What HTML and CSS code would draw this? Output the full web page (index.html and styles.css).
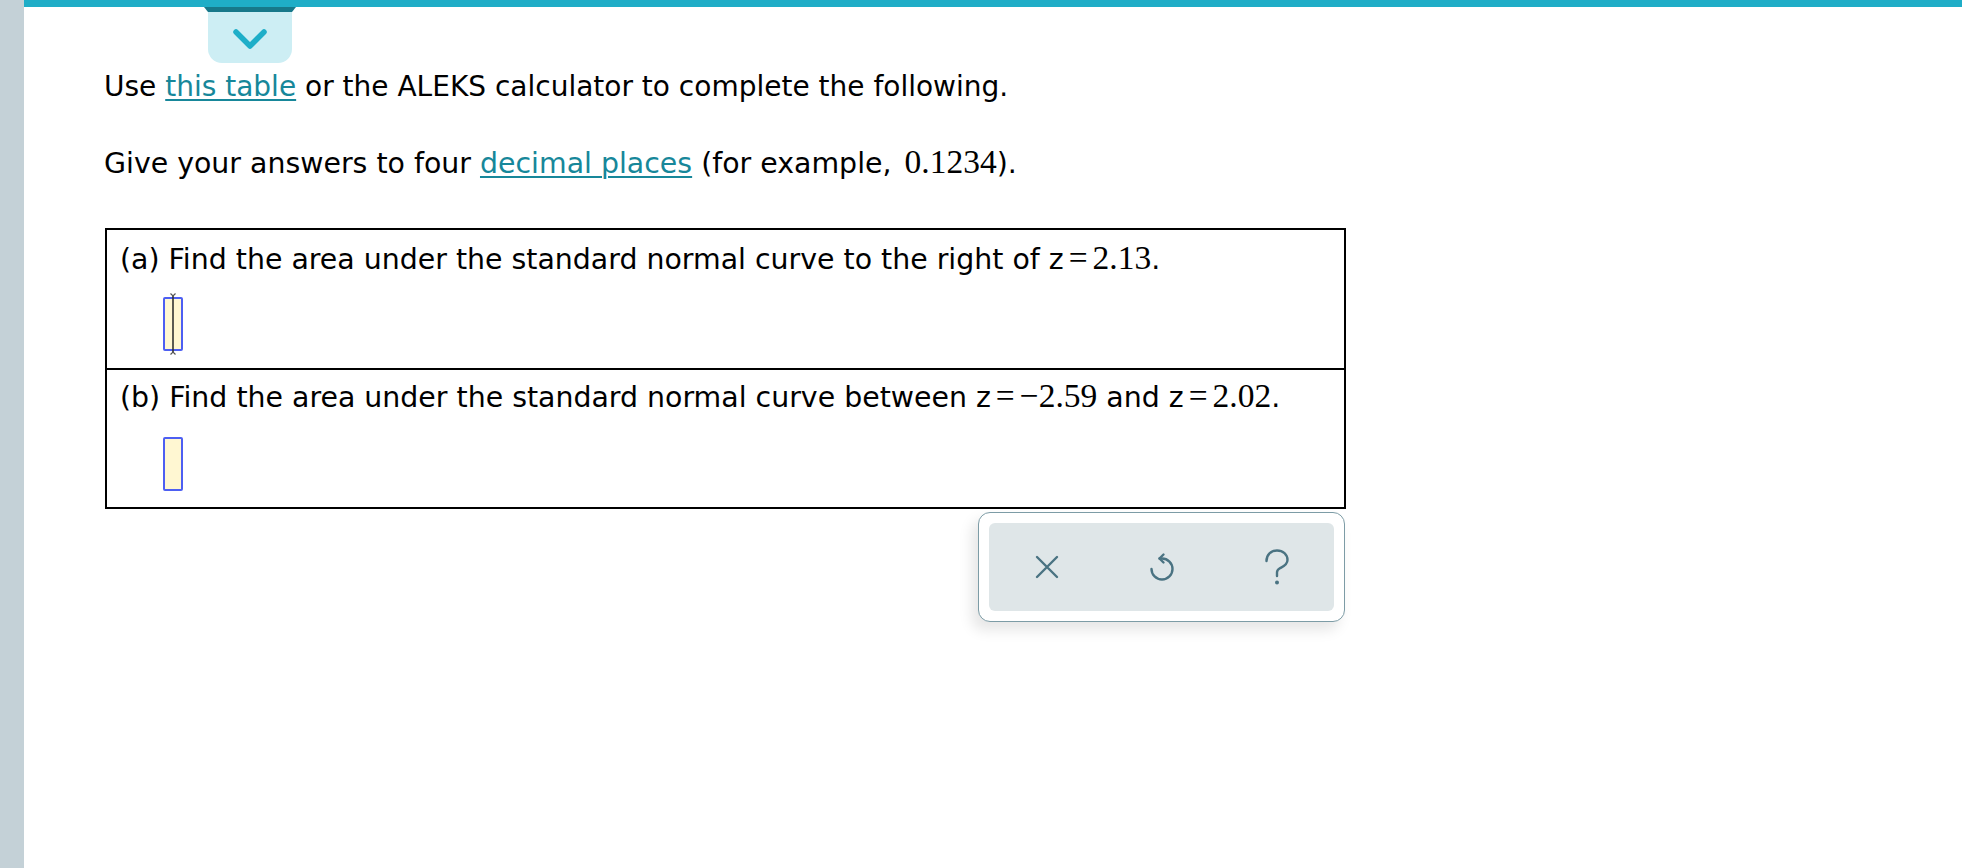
FILE: index.html
```html
<!DOCTYPE html>
<html lang="en">
<head>
<meta charset="utf-8">
<title>ALEKS</title>
<link rel="stylesheet" href="styles.css">
</head>
<body>
<div class="app">
  <div class="sidebar"></div>
  <div class="main">
    <div class="topbar"></div>
    <div class="tab">
      <svg class="chev" width="36" height="22" viewBox="0 0 36 22"><path d="M4 4 L18 18 L32 4" fill="none" stroke="#1eaec8" stroke-width="5.5" stroke-linecap="round" stroke-linejoin="round"/></svg>
    </div>
    <div class="content">
      <p class="line line1">Use <a class="link" href="#">this table</a> or the ALEKS calculator to complete the following.</p>
      <p class="line line2">Give your answers to four <a class="link" href="#">decimal places</a> (for example, <span class="math num">0.1234</span>).</p>
      <div class="qwrap">
        <div class="qbox">
          <div class="part">
            <div class="line">(a) Find the area under the standard normal curve to the right of z<span class="math eq">=</span><span class="math">2.13</span>.</div>
            <div class="answer">
              <span class="input">
                <svg class="caret" width="20" height="62" viewBox="0 0 20 62"><path d="M10 2 V60" stroke="#333" stroke-width="1.6" fill="none"/><path d="M7.5 0.5 L10 3 L12.5 0.5 M7.5 61.5 L10 59 L12.5 61.5" stroke="#555" stroke-width="1.2" fill="none"/></svg>
              </span>
            </div>
          </div>
          <div class="part part-b">
            <div class="line">(b) Find the area under the standard normal curve between z<span class="math eq">=</span><span class="math">&minus;2.59</span> and z<span class="math eq">=</span><span class="math">2.02</span>.</div>
            <div class="answer">
              <span class="input"></span>
            </div>
          </div>
        </div>
        <div class="toolrow">
          <div class="tools">
            <div class="tools-inner">
              <button class="tbtn" aria-label="Clear">
                <svg width="24" height="24" viewBox="0 0 24 24"><path d="M2 2 L22 22 M22 2 L2 22" stroke="#4a7382" stroke-width="2.4" stroke-linecap="round" fill="none"/></svg>
              </button>
              <button class="tbtn" aria-label="Undo">
                <svg width="28" height="30" viewBox="0 0 28 30"><path d="M11.5 6.5 H14 A10.5 10.5 0 1 1 3.5 17" stroke="#4a7382" stroke-width="2.4" stroke-linecap="round" fill="none"/><path d="M15.5 2.5 L11.5 6.5 L15.5 10.5" stroke="#4a7382" stroke-width="2.4" stroke-linecap="round" stroke-linejoin="round" fill="none"/></svg>
              </button>
              <button class="tbtn" aria-label="Help">
                <svg width="26" height="37" viewBox="0 0 26 37"><path d="M2.5 12 C2.5 5.5 7 1.5 13 1.5 C19 1.5 23.5 5.5 23.5 11 C23.5 16 19 17.5 15.5 19.5 C13.8 20.5 13 21.5 13 23.5 V27" stroke="#4a7382" stroke-width="2.4" stroke-linecap="round" fill="none"/><circle cx="13" cy="33.5" r="2" fill="#4a7382"/></svg>
              </button>
            </div>
          </div>
        </div>
      </div>
    </div>
  </div>
</div>
</body>
</html>
```
FILE: styles.css
```css
html, body {
  margin: 0;
  padding: 0;
  background: #ffffff;
}
body {
  font-family: "DejaVu Sans", Verdana, sans-serif;
  font-size: 28px;
  color: #000;
  height: 868px;
  overflow: hidden;
}
.app {
  display: flex;
  height: 868px;
}
.sidebar {
  width: 24px;
  flex: none;
  background: #c4d1d7;
}
.main {
  flex: 1;
  position: relative;
}
.topbar {
  height: 7px;
  background: #1fadc7;
}
.tab {
  position: absolute;
  left: 184px;
  top: 7px;
  width: 84px;
  height: 56px;
  background: #cdeef4;
  border-radius: 0 0 14px 14px;
  box-sizing: border-box;
  padding-top: 21px;
}
.tab::before {
  content: "";
  position: absolute;
  left: -4px;
  right: -4px;
  top: 0;
  height: 5px;
  background: #17788a;
  clip-path: polygon(0 0, 100% 0, calc(100% - 4px) 100%, 4px 100%);
}
.chev {
  display: block;
  margin: 0 auto;
}
.content {
  padding: 62px 0 0 80px;
}
.line {
  margin: 0;
  line-height: 34px;
  white-space: nowrap;
}
.line1 {
  margin-top: 1px;
}
.line2 {
  margin-top: 43px;
  font-size: 28.4px;
}
.link {
  color: #17879a;
  text-decoration: underline;
  text-underline-offset: 3px;
  text-decoration-thickness: 2px;
}
.math {
  font-family: "Liberation Serif", "Times New Roman", serif;
  font-size: 33.5px;
  line-height: 0;
}
.num {
  padding-left: 4px;
}
.eq {
  padding: 0 5px;
}
.qwrap {
  width: 1241px;
  margin-top: 47px;
  margin-left: 1px;
}
.qbox {
  border: 2px solid #000;
}
.part {
  padding: 13px 13px 17px 13px;
  font-size: 28.4px;
}
.part-b {
  border-top: 2px solid #000;
  padding-top: 11px;
  padding-bottom: 16px;
}
.answer {
  margin-top: 20px;
  padding-left: 43px;
  height: 54px;
}
.part-b .answer {
  margin-top: 22px;
}
.input {
  display: block;
  position: relative;
  width: 20px;
  height: 54px;
  box-sizing: border-box;
  border: 2px solid #4d5ff2;
  border-radius: 2px;
  background: #fff7d2;
}
.caret {
  position: absolute;
  left: -2px;
  top: -6px;
}
.toolrow {
  display: flex;
  justify-content: flex-end;
  margin-top: 3px;
  margin-right: 1px;
}
.tools {
  width: 367px;
  height: 110px;
  box-sizing: border-box;
  border: 1.5px solid #7d9ca6;
  border-radius: 12px;
  background: #fff;
  padding: 10px;
  box-shadow: -6px 8px 14px rgba(0, 0, 0, 0.10);
}
.tools-inner {
  height: 100%;
  background: #dfe6e8;
  border-radius: 6px;
  display: flex;
  align-items: center;
}
.tbtn {
  flex: 1;
  height: 100%;
  border: 0;
  background: transparent;
  padding: 0;
  display: flex;
  align-items: center;
  justify-content: center;
  cursor: pointer;
}
.tbtn svg {
  display: block;
}
```
